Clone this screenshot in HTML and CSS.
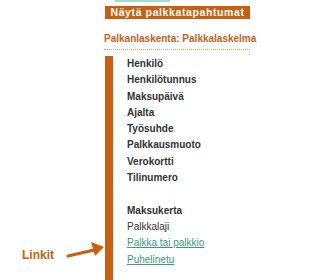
FILE: index.html
```html
<!DOCTYPE html>
<html lang="fi">
<head>
<meta charset="utf-8">
<link rel="stylesheet" href="styles.css">
</head>
<body>
<div class="page">
  <div class="strip"></div>
  <div class="btn">Näytä palkkatapahtumat</div>
  <div class="heading">Palkanlaskenta: Palkkalaskelma</div>
  <div class="rule"></div>
  <div class="body">
    <div class="bar"></div>
    <ul class="list">
      <li class="b">Henkilö</li>
      <li class="b">Henkilötunnus</li>
      <li class="b">Maksupäivä</li>
      <li class="b">Ajalta</li>
      <li class="b">Työsuhde</li>
      <li class="b">Palkkausmuoto</li>
      <li class="b">Verokortti</li>
      <li class="b">Tilinumero</li>
      <li class="gap">&nbsp;</li>
      <li class="b">Maksukerta</li>
      <li>Palkkalaji</li>
      <li><a href="#" class="link">Palkka tai palkkio</a></li>
      <li><a href="#" class="link">Puhelinetu</a></li>
    </ul>
  </div>
  <div class="note">Linkit</div>
  <svg class="arrow" width="44" height="22" viewBox="0 0 44 22">
    <path d="M4 17 L30 11" stroke="#c8600f" stroke-width="3.2" stroke-linecap="round" fill="none"/>
    <polygon points="40,8 27,3 31,17" fill="#c8600f"/>
  </svg>
</div>
</body>
</html>
```
FILE: styles.css
```css
html, body {
  margin: 0;
  padding: 0;
  background: #ffffff;
}
body {
  font-family: "Liberation Sans", Arial, sans-serif;
  width: 257px;
  height: 280px;
  overflow: hidden;
}
.page {
  position: relative;
  padding-left: 104px;
}
.strip {
  margin-left: 11px;
  width: 55px;
  height: 2px;
  background: #a9dcc4;
}
.btn {
  margin-top: 4px;
  margin-left: 1px;
  width: 145px;
  height: 13px;
  line-height: 13px;
  background: #c8600f;
  color: #ffffff;
  font-weight: bold;
  font-size: 10.5px;
  letter-spacing: 0.6px;
  text-align: center;
}
.heading {
  margin-top: 13px;
  color: #c4621c;
  font-weight: bold;
  font-size: 10px;
  line-height: 13px;
  white-space: nowrap;
}
.rule {
  margin-top: 4px;
  width: 146px;
  border-top: 1px dotted #d49a6c;
}
.body {
  display: flex;
  margin-top: 6px;
  height: 227px;
  overflow: hidden;
}
.bar {
  width: 8px;
  margin-left: 1px;
  background: #c8600f;
}
.list {
  list-style: none;
  margin: 0;
  padding: 0 0 0 14px;
  font-size: 10px;
  line-height: 16.3px;
  color: #333333;
}
.list .b {
  font-weight: bold;
}
.link {
  color: #3a9a78;
  text-decoration: underline;
}
.note {
  position: absolute;
  left: 22px;
  top: 248px;
  color: #c8600f;
  font-weight: bold;
  font-size: 12px;
}
.arrow {
  position: absolute;
  left: 64px;
  top: 239px;
}
```
